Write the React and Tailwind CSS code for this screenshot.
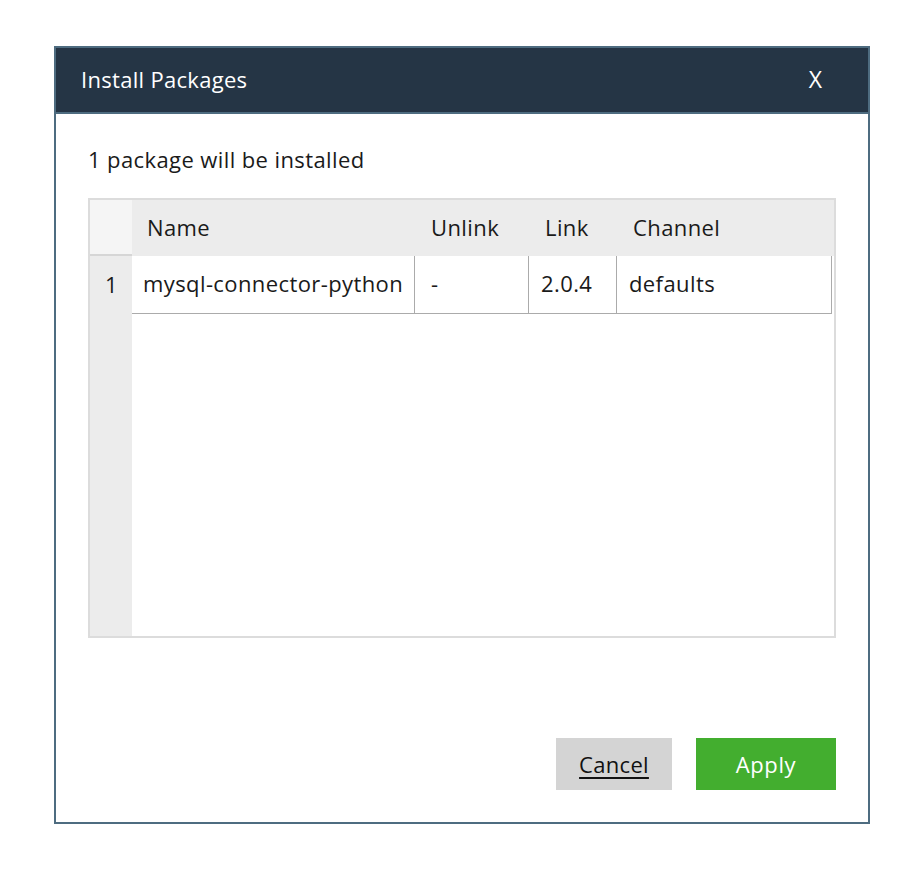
export default function App() {
  const font = { fontFamily: '"Open Sans", "Noto Sans", sans-serif' };
  return (
    <div className="w-[924px] h-[886px] bg-white pt-[46px]" style={font}>
      <div className="mx-auto w-[816px] h-[778px] border-2 border-[#4e6c80] flex flex-col">
        <div className="h-[66px] bg-[#253545] border-b-2 border-[#4e6c80] flex items-center justify-between pl-[25px] pr-[46px] pb-[2px]">
          <span className="text-white text-[22px] tracking-[0.3px]">Install Packages</span>
          <span className="text-white text-[23px]">X</span>
        </div>
        <div className="flex-1 flex flex-col px-[32px]">
          <div className="mt-[33px] text-[22px] leading-[24px] text-[#1a1a1a] tracking-[0.4px]">1 package will be installed</div>
          <div className="mt-[27px] w-[748px] h-[440px] border-2 border-[#dcdcdc] flex">
            <div className="w-[42px] bg-[#ececec] flex flex-col">
              <div className="h-[56px] bg-[#f5f5f5] border-b-2 border-[#d6d6d6]"></div>
              <div className="h-[58px] flex items-center pl-[15px] pb-[1px] text-[22px] text-[#1a1a1a]">1</div>
            </div>
            <div className="flex-1 flex flex-col text-[22px] text-[#1a1a1a] tracking-[0.4px]">
              <div className="h-[56px] bg-[#ececec] flex items-center pb-[2px]">
                <div className="w-[282px] pl-[15px]">Name</div>
                <div className="w-[114px] pl-[17px]">Unlink</div>
                <div className="w-[88px] pl-[17px]">Link</div>
                <div className="pl-[17px]">Channel</div>
              </div>
              <div className="h-[58px] mr-[2px] border-b border-r border-[#ababab] flex">
                <div className="w-[283px] pl-[11px] pb-[2px] border-r border-[#ababab] flex items-center">mysql-connector-python</div>
                <div className="w-[114px] pl-[16px] pb-[2px] border-r border-[#ababab] flex items-center">-</div>
                <div className="w-[88px] pl-[12px] pb-[2px] border-r border-[#ababab] flex items-center">2.0.4</div>
                <div className="flex-1 pl-[12px] pb-[2px] flex items-center">defaults</div>
              </div>
            </div>
          </div>
          <div className="mt-auto mb-[32px] flex justify-end gap-[24px]">
            <button className="w-[116px] h-[52px] bg-[#d4d4d4] text-[22px] tracking-[0.3px] text-[#111] underline underline-offset-[4px]">Cancel</button>
            <button className="w-[140px] h-[52px] bg-[#43ae2f] text-[22px] tracking-[0.6px] text-white">Apply</button>
          </div>
        </div>
      </div>
    </div>
  );
}
